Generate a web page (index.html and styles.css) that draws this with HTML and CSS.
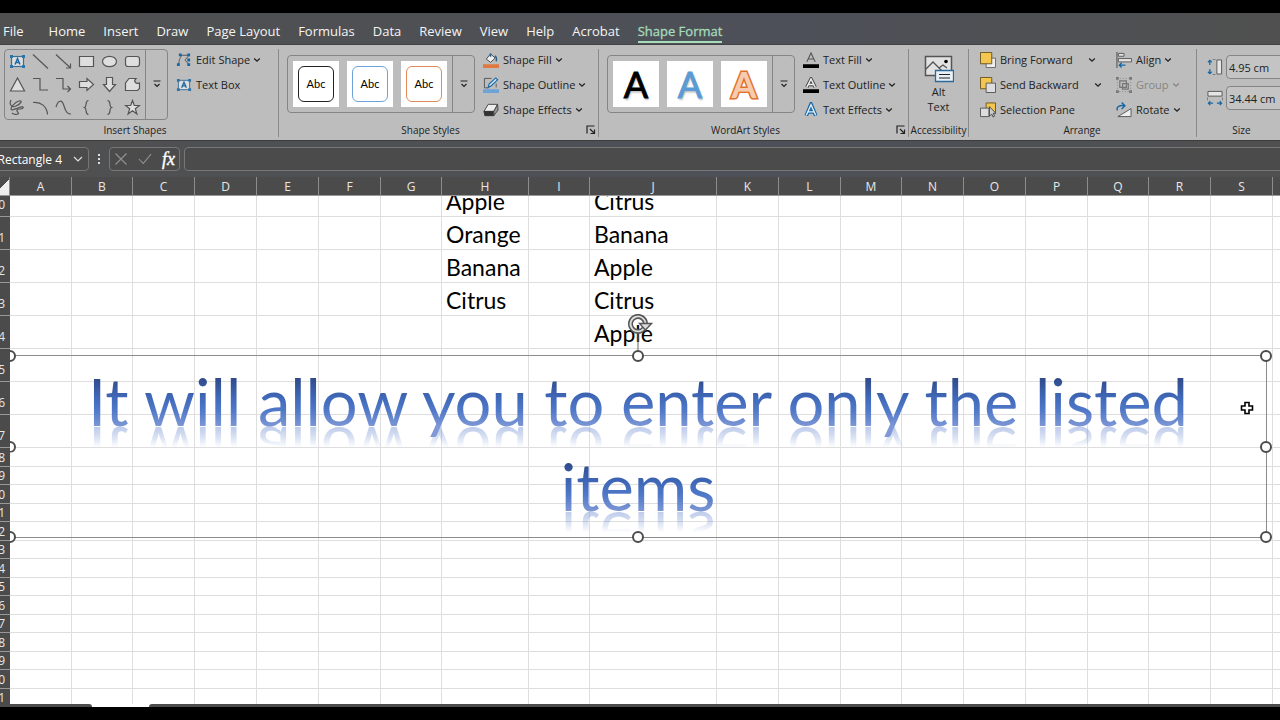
FILE: index.html
```html
<!DOCTYPE html>
<html lang="en">
<head>
    <meta charset="UTF-8">
    <meta name="viewport" content="width=device-width, initial-scale=1.0">
    <title>Excel - Shape Format</title>
    <link rel="stylesheet" href="styles.css">
</head>
<body>
    <svg class="defs" aria-hidden="true">
        <symbol id="chev" viewBox="0 0 8 8"><path d="M1.200 2.500 4 5.200l2.800-2.700" fill="none" stroke="currentColor" stroke-width="1.300"/></symbol>
        <symbol id="more" viewBox="0 0 10 10"><path d="M1.500 2h7M2.500 5 5 7.500 7.500 5" fill="none" stroke="#222" stroke-width="1.200"/></symbol>
        <symbol id="launch" viewBox="0 0 10 10"><path d="M1 8.500V1h7.500M4 4l4.500 4.500M8.500 4.500v4h-4" fill="none" stroke="#222" stroke-width="1.200"/></symbol>
        <symbol id="textbox" viewBox="0 0 17 17">
            <rect x="2.500" y="3.500" width="12" height="10" fill="#ddd" stroke="#3b6f96"/>
            <path d="M6 11.500 8.500 5.500l2.500 6M7 9.500h3" fill="none" stroke="#1767a5" stroke-width="1.400"/>
            <path d="M1 2h3v3H1zM13 2h3v3h-3zM1 12h3v3H1zM13 12h3v3h-3z" fill="#2b74a8"/>
        </symbol>
    </svg>

    <div class="letterbox"></div>

    <nav class="tabs">
        <button class="tab first">File</button>
        <button class="tab">Home</button>
        <button class="tab">Insert</button>
        <button class="tab">Draw</button>
        <button class="tab">Page Layout</button>
        <button class="tab">Formulas</button>
        <button class="tab">Data</button>
        <button class="tab">Review</button>
        <button class="tab">View</button>
        <button class="tab">Help</button>
        <button class="tab">Acrobat</button>
        <button class="tab active">Shape Format</button>
    </nav>

    <div class="ribbon">
        <section class="group insert-shapes">
            <div class="group-body">
                <div class="gallery shapes">
                    <div class="shape-grid">
                        <button aria-label="Text box"><svg viewBox="0 0 17 17"><use class="plain" href="#textbox"/></svg></button>
                        <button aria-label="Line"><svg viewBox="0 0 17 17"><path d="M1 1.500 16 15.500"/></svg></button>
                        <button aria-label="Arrow line"><svg viewBox="0 0 17 17"><path d="M1 1.500 15.500 15M15.500 10.500V15H11"/></svg></button>
                        <button aria-label="Rectangle"><svg viewBox="0 0 17 17"><path class="f" d="M1.500 3.500h14v10h-14z"/></svg></button>
                        <button aria-label="Oval"><svg viewBox="0 0 17 17"><ellipse class="f" cx="8.500" cy="8.500" rx="7" ry="5.200"/></svg></button>
                        <button aria-label="Rounded rectangle"><svg viewBox="0 0 17 17"><rect class="f" x="1.500" y="3.500" width="14" height="10" rx="2.500"/></svg></button>
                        <button aria-label="Triangle"><svg viewBox="0 0 17 17"><path class="f" d="M8.500 2 15.500 15h-14z"/></svg></button>
                        <button aria-label="Elbow"><svg viewBox="0 0 17 17"><path d="M1 2.500h7V14h8"/></svg></button>
                        <button aria-label="Elbow arrow"><svg viewBox="0 0 17 17"><path d="M1 2.500h7V13h7M12.500 10l3 3-3 3"/></svg></button>
                        <button aria-label="Right arrow"><svg viewBox="0 0 17 17"><path class="f" d="M1.500 5.500H9V2.500l6.500 6-6.500 6v-3H1.500z"/></svg></button>
                        <button aria-label="Down arrow"><svg viewBox="0 0 17 17"><path class="f" d="M5.500 1.500v7h-3l6 7 6-7h-3v-7z"/></svg></button>
                        <button aria-label="Freeform"><svg viewBox="0 0 17 17"><path class="f" d="M5 2.500h7c-3 3 0 6 3.500 4.500v5.500l-2 2h-12V7z"/></svg></button>
                        <button aria-label="Scribble"><svg viewBox="0 0 17 17"><path d="M2 1C0 5 2 9 7 7s7-6 3-5-8 6-8 8 4 0 7-1 6-2 5 0-5 0-6 2 3 3 1 4-5 0-6-1"/></svg></button>
                        <button aria-label="Arc"><svg viewBox="0 0 17 17"><path d="M1 3.500c8-1 14 4 14.500 12"/></svg></button>
                        <button aria-label="Curve"><svg viewBox="0 0 17 17"><path d="M1 8C3 1 7 0 9 7s4 8 7 8"/></svg></button>
                        <button aria-label="Left brace"><svg viewBox="0 0 17 17"><path d="M10.500 1.500c-4 0-1 6-4 7 3 1 0 7 4 7"/></svg></button>
                        <button aria-label="Right brace"><svg viewBox="0 0 17 17"><path d="M6.500 1.500c4 0 1 6 4 7-3 1 0 7-4 7"/></svg></button>
                        <button aria-label="Star"><svg viewBox="0 0 17 17"><path class="f" d="m8.500 1.500 1.800 5h5.200l-4.200 3.200 1.600 5.300-4.400-3.200L4.100 15l1.600-5.300L1.500 6.500h5.200z"/></svg></button>
                    </div>
                    <button class="more" aria-label="More shapes"><svg><use href="#more"/></svg></button>
                </div>
                <div class="commands">
                    <button class="cmd"><svg class="ico" viewBox="0 0 17 17"><path d="M3 13c0-4 1-6 3-9.500M4 3.500h9M13.500 4 9.500 8.500l4 4.500" fill="none" stroke="#555"/><path d="M3 1.500h3v3H3zM12 1.500h3v3h-3zM12 7h3v3h-3zM1 12h3v3H1zM12 12h3v3h-3z" fill="#1767a5"/></svg>Edit Shape<svg class="chev"><use href="#chev"/></svg></button>
                    <button class="cmd"><svg class="ico"><use href="#textbox"/></svg>Text Box</button>
                </div>
            </div>
            <footer>Insert Shapes</footer>
        </section>

        <section class="group styles">
            <div class="group-body">
                <div class="gallery presets">
                    <div class="thumbs">
                        <button class="thumb"><span class="abc">Abc</span></button>
                        <button class="thumb"><span class="abc blue">Abc</span></button>
                        <button class="thumb"><span class="abc orange">Abc</span></button>
                    </div>
                    <button class="more" aria-label="More styles"><svg><use href="#more"/></svg></button>
                </div>
                <div class="commands">
                    <button class="cmd"><svg class="ico" viewBox="0 0 17 17"><path d="M3.500 7.500 8 2l5 4.500L8 11z" fill="#eee" stroke="#444"/><path d="M8 5V1.500M12.500 4c2 1 2 4 1.500 6" fill="none" stroke="#275d86" stroke-width="1.500"/><path d="M0 13h17v4H0z" fill="#e07840"/></svg>Shape Fill<svg class="chev"><use href="#chev"/></svg></button>
                    <button class="cmd"><svg class="ico" viewBox="0 0 17 17"><path d="M9 1.500H1.500v10H6M14 7v4" fill="none" stroke="#555"/><path d="m5.500 11 1-3.500 7-6.500 2 2-7 6.500z" fill="#cfe4f4" stroke="#1767a5" stroke-width="1.200"/><path d="M0 13h17v4H0z" fill="#6ea3d8"/></svg>Shape Outline<svg class="chev"><use href="#chev"/></svg></button>
                    <button class="cmd"><svg class="ico" viewBox="0 0 17 17"><path d="M1 10 5.500 2.500h10l-4 7.500z" fill="#eee" stroke="#444"/><path d="M1 10h10.500v4.500H2z" fill="#333" stroke="#333"/><path d="m11.500 14.500 4.500-6-.5-6-4 7.500z" fill="#999" stroke="#444"/></svg>Shape Effects<svg class="chev"><use href="#chev"/></svg></button>
                </div>
            </div>
            <footer>Shape Styles<button class="launch" aria-label="Format shape"><svg><use href="#launch"/></svg></button></footer>
        </section>

        <section class="group wordart">
            <div class="group-body">
                <div class="gallery presets">
                    <div class="thumbs">
                        <button class="thumb wa">A</button>
                        <button class="thumb wa blue">A</button>
                        <button class="thumb wa orange">A</button>
                    </div>
                    <button class="more" aria-label="More WordArt"><svg><use href="#more"/></svg></button>
                </div>
                <div class="commands">
                    <button class="cmd"><svg class="ico" viewBox="0 0 17 17"><path d="M4 10.500 8.500 1 13 10.500M5.500 7.500h6" fill="none" stroke="#555" stroke-width="1.200"/><path d="M0 13h17v4H0z"/></svg>Text Fill<svg class="chev"><use href="#chev"/></svg></button>
                    <button class="cmd"><svg class="ico" viewBox="0 0 17 17"><path d="M4 11 8.500 2 13 11M5.500 8h6" fill="none" stroke="#444" stroke-width="3.500"/><path d="M4 11 8.500 2 13 11M5.500 8h6" fill="none" stroke="#eee" stroke-width="1.500"/><path d="M0 13h17v4H0z"/></svg>Text Outline<svg class="chev"><use href="#chev"/></svg></button>
                    <button class="cmd"><svg class="ico" viewBox="0 0 17 17"><path d="M3.500 14.500 8.500 2.500l5 12M5.500 10.500h6" fill="none" stroke="#1767a5" stroke-width="4"/><path d="M3.500 14 8.500 3l5 11M5.500 10.500h6" fill="none" stroke="#e4eef6" stroke-width="1.500"/></svg>Text Effects<svg class="chev"><use href="#chev"/></svg></button>
                </div>
            </div>
            <footer>WordArt Styles<button class="launch" aria-label="Format text"><svg><use href="#launch"/></svg></button></footer>
        </section>

        <section class="group access">
            <div class="group-body">
                <button class="big">
                    <svg viewBox="0 0 30 28"><path d="M1.500 1.500h26v19h-26z" fill="#e2e2e2" stroke="#555" stroke-width="1.500"/><path d="m2 14 7-7 9 9M15 13l4-3 4 3" fill="none" stroke="#555" stroke-width="1.300"/><circle cx="22" cy="6.500" r="1.800"/><path d="M11.500 15.500h18v11h-18z" fill="#e9f0f6" stroke="#2b6a9b" stroke-width="1.300"/><path d="M15 19.500h11M15 23h11" stroke="#222" stroke-width="1.200"/></svg>
                    <span>Alt<br>Text</span>
                </button>
            </div>
            <footer>Accessibility</footer>
        </section>

        <section class="group arrange">
            <div class="group-body">
                <div class="commands stack">
                    <button class="cmd"><svg class="ico" viewBox="0 0 17 17"><path d="M6.500 6.500h10v10h-10z" fill="#eee" stroke="#666"/><path d="M.5.5h12v12H.5z" fill="#f3c64f" stroke="#6b5520"/></svg>Bring Forward<svg class="chev"><use href="#chev"/></svg></button>
                    <button class="cmd wide"><svg class="ico" viewBox="0 0 17 17"><path d="M.5.5h12v12H.5z" fill="#f3c64f" stroke="#6b5520"/><path d="M6.500 6.500h10v10h-10z" fill="#ddd" stroke="#555"/></svg>Send Backward<svg class="chev"><use href="#chev"/></svg></button>
                    <button class="cmd"><svg class="ico" viewBox="0 0 17 17"><path d="M6.500 1h10v10h-10z" fill="#f3c64f" stroke="#6b5520"/><path d="M.5 6.500h9v9H.5z" fill="#ddd" stroke="#555"/><path d="M10 5v10l2.500-2 1.500 3 1.500-1-1.500-3h3z" fill="#ccc" stroke="#444"/></svg>Selection Pane</button>
                </div>
                <div class="commands">
                    <button class="cmd"><svg class="ico" viewBox="0 0 17 17"><path d="M1 0v17" stroke="#444"/><path d="M2.500 1.500h6v3h-6zM2.500 7h14v3.500h-14z" fill="#e5e5e5" stroke="#555"/><path d="M10 14H4M6 11.500 3.500 14 6 16.500" fill="none" stroke="#1767a5" stroke-width="1.400"/></svg>Align<svg class="chev"><use href="#chev"/></svg></button>
                    <button class="cmd" disabled><svg class="ico" viewBox="0 0 17 17"><path d="M4 4h7v7H4zM7 7h6v6H7z" fill="none" stroke="#777" stroke-width="1.300"/><path d="M0 0h3v3H0zM14 0h3v3h-3zM0 14h3v3H0zM14 14h3v3h-3z" fill="#777"/><path d="M1.500 1.500h14v14h-14z" fill="none" stroke="#888" stroke-dasharray="1 2"/></svg>Group<svg class="chev"><use href="#chev"/></svg></button>
                    <button class="cmd"><svg class="ico" viewBox="0 0 17 17"><path d="M2 15.500h14V7z" fill="#eee" stroke="#555"/><path d="M1.500 9C0 5 4 3 9 4M6 0.500 9.500 4 6 7.500" fill="none" stroke="#1767a5" stroke-width="1.500"/></svg>Rotate<svg class="chev"><use href="#chev"/></svg></button>
                </div>
            </div>
            <footer>Arrange</footer>
        </section>

        <section class="group size">
            <div class="group-body">
                <label class="dim"><svg class="ico" viewBox="0 0 17 17"><path d="M10.500 1h5v15h-5z" fill="#e5e5e5" stroke="#555"/><path d="M6 .5h3M6 16.500h3" stroke="#777"/><path d="M3 1.500v5M1 3.500l2-2 2 2M3 15.500v-5M1 13.500l2 2 2-2" fill="none" stroke="#1767a5" stroke-width="1.300"/></svg><input type="text" value="4.95 cm" aria-label="Height"></label>
                <label class="dim"><svg class="ico" viewBox="0 0 17 17"><path d="M1 1.500h15v5H1z" fill="#e5e5e5" stroke="#555"/><path d="M.5 8v3M16.500 8v3" stroke="#777"/><path d="M1.500 14h5M3.500 12l-2 2 2 2M15.500 14h-5M13.500 12l2 2-2 2" fill="none" stroke="#1767a5" stroke-width="1.300"/></svg><input type="text" value="34.44 cm" aria-label="Width"></label>
            </div>
            <footer>Size</footer>
        </section>
    </div>

    <div class="formula-bar">
        <button class="name-box">Rectangle 4<svg viewBox="0 0 12 12"><path d="m2 4 4 4 4-4" fill="none" stroke="#ddd" stroke-width="1.200"/></svg></button>
        <span class="dots"><i></i><i></i><i></i></span>
        <div class="fx">
            <button aria-label="Cancel"><svg viewBox="0 0 14 14"><path d="m1.500 1.500 11 11M12.500 1.500l-11 11"/></svg></button>
            <button aria-label="Enter"><svg viewBox="0 0 16 14"><path d="m1 7 5 5L15 1.500"/></svg></button>
            <button class="fn">fx</button>
        </div>
        <input type="text" class="formula" aria-label="Formula">
    </div>

    <main class="sheet">
        <table>
            <thead><tr id="letters"></tr></thead>
            <tbody id="rows"></tbody>
        </table>

        <div class="shape">
            <p><span>It will allow you to enter only the listed</span><span>items</span></p>
            <i class="handle nw"></i><i class="handle n"></i><i class="handle ne"></i>
            <i class="handle w"></i><i class="handle e"></i>
            <i class="handle sw"></i><i class="handle s"></i><i class="handle se"></i>
            <svg class="rotate" viewBox="0 0 26 36"><path d="M11 18v18" stroke="#666"/><path d="M17.300 14A7.500 7.500 0 1 1 18.500 10" fill="none" stroke="#555" stroke-width="5"/><path d="M17.300 14A7.500 7.500 0 1 1 18.500 10" fill="none" stroke="#ddd" stroke-width="1.800"/><path d="M12.500 9.500h12l-6 6.500z" fill="#ddd" stroke="#555" stroke-width="1.400"/></svg>
            <svg class="cursor" viewBox="0 0 14 14"><path d="M5 1.500h4V5h3.500v4H9v3.500H5V9H1.500V5H5z" fill="#fff" stroke="#000" stroke-width="1.600"/></svg>
        </div>
    </main>

    <div class="bottom-edge"><span class="left"></span><span class="right"></span></div>
    <div class="letterbox"></div>

    <script>
        // The last column is only a sliver at the right edge, so it has no letter
        const letters = [...'ABCDEFGHIJKLMNOPQRS', ''];
        const widths = { B: 'narrow', G: 'narrow', I: 'narrow', M: 'narrow', Q: 'narrow', H: 'col-h', J: 'col-j' };
        const cells = {
            H10: 'Apple', H11: 'Orange', H12: 'Banana', H13: 'Citrus',
            J10: 'Citrus', J11: 'Banana', J12: 'Apple', J13: 'Citrus', J14: 'Apple'
        };

        // Column letters
        const head = document.getElementById('letters');
        head.innerHTML = '<th class="corner"></th>' + letters.map(l => `<th class="${widths[l] || ''}">${l}</th>`).join('');

        // Rows 10 to 17 are tall, the rest use the default height
        const body = document.getElementById('rows');
        for (let r = 10; r <= 31; r++) {
            const tr = document.createElement('tr');
            tr.className = r === 10 ? 'cut' : r < 18 ? 'tall' : '';
            tr.innerHTML = `<th>${r}</th>` + letters.map(l => `<td><div>${cells[l + r] || ''}</div></td>`).join('');
            body.appendChild(tr);
        }
    </script>
</body>
</html>
```
FILE: styles.css
```css
* {
    box-sizing: border-box;
}
body {
    margin: 0;
    height: 100vh;
    overflow: hidden;
    display: flex;
    flex-direction: column;
    background: #4f5054;
    font-family: "Open Sans", "Noto Sans", sans-serif;
    font-size: 12px;
    color: #222;
}
button {
    font: inherit;
    color: inherit;
    background: none;
    border: none;
    padding: 0;
}
.defs {
    position: absolute;
    width: 0;
    height: 0;
}
.letterbox {
    flex: none;
    height: 13px;
    background: #000;
}

/* Tabs */
.tabs {
    flex: none;
    height: 32px;
    display: flex;
    align-items: center;
    gap: 18px;
    padding: 4px 3px 0;
    background: linear-gradient(90deg, #505050, #4d5058 60%, #505050);
    color: #f4f4f4;
    border-bottom: 1px solid #444;
}
.tab {
    font-size: 13px;
    line-height: 20px;
    padding: 2px 0 0;
    border-bottom: 2px solid transparent;
    white-space: nowrap;
}
.tab.first {
    margin-right: 7px;
}
.tab.active {
    color: #a5dcbc;
    -webkit-text-stroke: 0.3px #a5dcbc;
    border-color: #a5dcbc;
}

/* Ribbon */
.ribbon {
    flex: none;
    height: 95px;
    display: flex;
    padding: 4px 0 3px;
    background: #bdbdbd;
    font-size: 11px;
    overflow: hidden;
}
.group {
    flex: none;
    display: flex;
    flex-direction: column;
    justify-content: space-between;
    border-right: 1px solid #8a8a8a;
}
.group-body {
    display: flex;
    align-items: center;
    height: 70px;
}
.group footer {
    position: relative;
    font-size: 10px;
    line-height: 14px;
    text-align: center;
}
.insert-shapes {
    width: 279px;
    padding-left: 4px;
}
.insert-shapes footer {
    padding-right: 12px;
}
.styles {
    width: 320px;
    padding-left: 8px;
}
.wordart {
    width: 310px;
    padding-left: 8px;
}
.styles footer,
.wordart footer {
    padding-right: 24px;
}
.access {
    width: 60px;
}
.arrange {
    width: 228px;
    padding-left: 11px;
}
.arrange footer {
    padding-right: 12px;
}
.size {
    flex: 1;
    min-width: 0;
    padding-left: 10px;
    border: none;
}
.launch {
    position: absolute;
    right: 2px;
    top: 2px;
}
.launch svg {
    display: block;
    width: 10px;
    height: 10px;
}
.gallery {
    flex: none;
    display: flex;
    border: 1px solid #858585;
    border-radius: 4px;
}
.gallery .more {
    width: 22px;
    border-left: 1px solid #858585;
}
.more svg {
    width: 10px;
    height: 10px;
}
.shape-grid {
    display: grid;
    grid-template-columns: repeat(6, 23px);
    grid-auto-rows: 23px;
    padding: 0 1px;
}
.shape-grid button {
    display: flex;
    align-items: center;
    justify-content: center;
}
.shape-grid svg {
    width: 17px;
    height: 17px;
    fill: none;
    stroke: #555;
    stroke-width: 1.2;
}
.shape-grid .plain {
    stroke: none;
}
.shape-grid .f {
    fill: #dedede;
}
.presets {
    height: 58px;
}
.thumbs {
    display: flex;
    align-items: center;
    gap: 8px;
    padding: 0 5px;
}
.thumb {
    width: 46px;
    height: 46px;
    background: #fff;
    display: flex;
    align-items: center;
    justify-content: center;
}
.abc {
    width: 36px;
    height: 36px;
    border: 1px solid #222;
    border-radius: 6px;
    font-family: Lato, sans-serif;
    font-size: 11px;
    line-height: 34px;
    color: #000;
}
.abc.blue {
    border-color: #6ea3d8;
}
.abc.orange {
    border-color: #e08a55;
}
.wa {
    font-family: Lato, sans-serif;
    font-size: 36px;
    color: #000;
    -webkit-text-stroke: 1px #000;
    text-shadow: 1px 2px 2px #bbb;
}
.wa.blue {
    color: #5b9bd5;
    -webkit-text-stroke-color: #5b9bd5;
}
.wa.orange {
    color: #f8cbad;
    font-weight: 700;
    -webkit-text-stroke: 3px #e07030;
    paint-order: stroke fill;
    text-shadow: none;
}
.commands {
    display: flex;
    flex-direction: column;
    align-self: flex-start;
    align-items: flex-start;
    padding-left: 8px;
}
.cmd {
    display: flex;
    align-items: center;
    height: 25px;
    padding-bottom: 4px;
    white-space: nowrap;
}
.cmd:disabled {
    color: #858585;
}
.ico {
    flex: none;
    width: 16px;
    height: 16px;
    margin-right: 4px;
}
.chev {
    width: 8px;
    height: 8px;
    margin-left: 3px;
}
.stack {
    width: 128px;
    padding-left: 0;
}
.stack .cmd {
    width: 116px;
}
.stack .cmd.wide {
    width: 122px;
}
.stack .chev {
    margin-left: auto;
}
.big {
    width: 100%;
    line-height: 15px;
}
.big svg {
    display: block;
    width: 30px;
    height: 28px;
    margin: 0 auto 1px;
}
.size .group-body {
    flex-direction: column;
    align-items: stretch;
    gap: 7px;
    padding-top: 6px;
}
.dim {
    display: flex;
    align-items: center;
}
.dim .ico {
    margin-right: 3px;
}
.dim input {
    flex: none;
    width: 90px;
    height: 24px;
    padding: 0 2px;
    font: inherit;
    color: #222;
    background: #c4c4c4;
    border: 1px solid #858585;
    border-radius: 4px;
}
.size footer {
    padding-right: 4px;
}

/* Formula bar */
.formula-bar {
    flex: none;
    height: 37px;
    display: flex;
    align-items: center;
    border-top: 1px solid #3c3c3c;
    background: linear-gradient(90deg, #505050, #4d5058 60%, #505050);
    color: #fff;
}
.name-box {
    display: flex;
    align-items: center;
    justify-content: flex-end;
    gap: 10px;
    width: 120px;
    height: 24px;
    margin-left: -31px;
    padding-right: 4px;
    border: 1px solid #777;
    border-radius: 4px;
    background: #4b4b4b;
}
.name-box svg {
    width: 12px;
    height: 12px;
}
.dots {
    display: flex;
    flex-direction: column;
    gap: 2px;
    margin: 0 9px;
}
.dots i {
    width: 2px;
    height: 2px;
    background: #ddd;
}
.fx {
    display: flex;
    align-items: center;
    gap: 10px;
    height: 24px;
    padding: 0 4px;
    border: 1px solid #777;
    border-radius: 4px;
    background: #4b4b4b;
}
.fx svg {
    display: block;
    width: 14px;
    height: 14px;
    fill: none;
    stroke: #909090;
    stroke-width: 1.2;
}
.fn {
    font: italic 18px/20px "Liberation Serif", serif;
    -webkit-text-stroke: 0.4px #fff;
}
.formula {
    flex: 1;
    height: 24px;
    margin: 0 -6px 0 4px;
    color: #fff;
    background: #4b4b4b;
    border: 1px solid #777;
    border-radius: 4px;
}

/* Worksheet, scrolled so the row numbers are half off the left side */
.sheet {
    position: relative;
    flex: 1;
    min-height: 0;
    overflow: hidden;
    background: #fff;
}
table {
    width: max-content;
    margin-left: -20px;
    table-layout: fixed;
    border-collapse: separate;
    border-spacing: 0;
}
th {
    min-width: 62px;
    padding: 0;
    font-weight: 400;
    background: #4b4b4b;
    color: #e8e8e8;
}
thead th {
    height: 19px;
    line-height: 16px;
    padding-top: 2px;
    border-right: 1px solid #8c8c8c;
    border-bottom: 1px solid #999;
}
thead .narrow {
    min-width: 61px;
}
thead .col-h {
    min-width: 87px;
}
thead .col-j {
    min-width: 127px;
}
thead .corner {
    min-width: 30px;
    background: linear-gradient(135deg, #4b4b4b 68%, #eee 68%);
}
tbody th {
    min-width: 30px;
    height: 18px;
    padding-right: 5px;
    line-height: 17px;
    text-align: right;
    vertical-align: bottom;
    border-bottom: 1px solid #999;
}
tbody tr:nth-child(odd) th {
    height: 19px;
}
tbody .tall th {
    height: 33px !important;
    padding-bottom: 3px;
}
tbody .cut th {
    height: 21px !important;
    padding-bottom: 3px;
}
td {
    padding: 0 4px;
    vertical-align: bottom;
    border-right: 1px solid #dedede;
    border-bottom: 1px solid #dedede;
    font-family: Lato, sans-serif;
    font-size: 23px;
    line-height: 30px;
    color: #000;
}
.cut div {
    display: flex;
    align-items: flex-end;
    height: 20px;
    overflow: hidden;
}

/* WordArt shape over the cells */
.shape {
    position: absolute;
    top: 178px;
    left: 10px;
    right: 13px;
    height: 183px;
    border: 1px solid #8c8c8c;
    border-left: none;
}
.shape p {
    margin: 3px 0 0;
    font-family: Lato, sans-serif;
    font-size: 65px;
    line-height: 85px;
    text-align: center;
    white-space: nowrap;
}
.shape span {
    display: block;
    color: transparent;
    background: linear-gradient(#2d4784 20%, #4068b8 45%, #4f78c8 60%, #7f98d6 80%);
    background-clip: text;
    -webkit-background-clip: text;
    -webkit-box-reflect: below -35px linear-gradient(transparent 55%, rgba(0, 0, 0, 0.5) 80%, transparent 80%);
}
.handle {
    position: absolute;
    width: 12px;
    height: 12px;
    margin: -6px;
    border: 2px solid #4c4c4c;
    border-radius: 50%;
    background: #fff;
}
.nw, .n, .ne { top: 0; }
.w, .e { top: 50%; }
.sw, .s, .se { top: 100%; }
.nw, .w, .sw { left: 0; clip-path: inset(0 0 0 6px); }
.n, .s { left: 50%; }
.ne, .e, .se { left: 100%; }
.rotate {
    position: absolute;
    left: 50%;
    bottom: 100%;
    width: 26px;
    height: 36px;
    margin: 0 0 6px -11px;
}
.cursor {
    position: absolute;
    top: 45px;
    right: 12px;
    width: 14px;
    height: 14px;
}

.bottom-edge {
    flex: none;
    display: flex;
    height: 3px;
    background: #fff;
}
.bottom-edge .left {
    width: 92px;
    background: #4b4b4b;
    border-top-right-radius: 3px;
}
.bottom-edge .right {
    flex: 1;
    margin-left: 57px;
    background: #4b4b4b;
    border-top-left-radius: 3px;
}
```
